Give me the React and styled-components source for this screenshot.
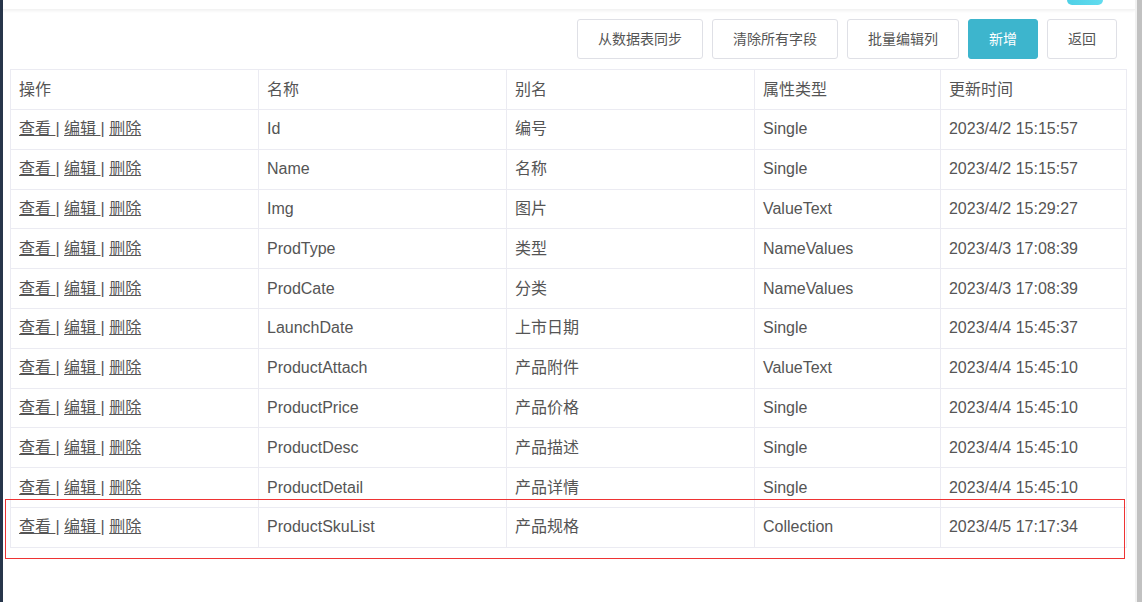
import React from "react";
import styled, { createGlobalStyle } from "styled-components";

const Global = createGlobalStyle`
  html, body { margin: 0; padding: 0; background: #fff; }
  body { font-family: "Liberation Sans", "Noto Sans CJK SC", sans-serif; overflow: hidden; line-height: 20px; }
`;

const Page = styled.div`
  display: flex;
  height: 602px;
  width: 1142px;
  position: relative;
`;

const SideStrip = styled.div`
  width: 3px;
  flex: none;
  background: #27354a;
`;

const Main = styled.div`
  flex: 1;
  display: flex;
  flex-direction: column;
  min-width: 0;
`;

const TopBar = styled.div`
  height: 9px;
  flex: none;
  background: #fff;
  box-shadow: 0 1px 3px rgba(0, 0, 0, 0.06);
  border-bottom: 1px solid #f3f3f3;
  display: flex;
  justify-content: flex-end;
  padding-right: 32px;
`;

const Pill = styled.div`
  width: 36px;
  height: 5px;
  border-radius: 0 0 14px 14px;
  background: linear-gradient(90deg, #4fd0e6, #62dcef);
`;

const Content = styled.div`
  padding: 9px 8px 0 7px;
`;

const Toolbar = styled.div`
  display: flex;
  justify-content: flex-end;
  gap: 9px;
  padding-right: 10px;
  margin-bottom: 10px;
`;

const Button = styled.button`
  height: 40px;
  padding: 0 20px;
  font-family: inherit;
  font-size: 14px;
  line-height: 18px;
  border-radius: 3px;
  border: 1px solid ${(p) => (p.$primary ? "#3db5cd" : "#dfe0e6")};
  background: ${(p) => (p.$primary ? "#3db5cd" : "#fff")};
  color: ${(p) => (p.$primary ? "#fff" : "#555")};
  cursor: pointer;
`;

const Table = styled.table`
  width: 100%;
  border-collapse: collapse;
  table-layout: fixed;
  font-size: 16px;
  line-height: 20px;
  color: #555;
`;

const Th = styled.th`
  width: ${(p) => p.$w};
  text-align: left;
  font-weight: normal;
  height: 40px;
  padding: 0 8px;
  border: 1px solid #ebebf2;
  box-sizing: border-box;
`;

const Td = styled.td`
  height: 39.8px;
  padding: 0 8px;
  border: 1px solid #ebebf2;
  box-sizing: border-box;
  white-space: nowrap;
`;

const Link = styled.a`
  color: #555;
  text-decoration: underline;
  cursor: pointer;
`;

const Highlight = styled.div`
  position: absolute;
  left: 5px;
  top: 499px;
  width: 1120px;
  height: 60px;
  box-sizing: border-box;
  border: 1px solid #ee3333;
  pointer-events: none;
`;

const ScrollBar = styled.div`
  width: 7px;
  flex: none;
  background: #f1f1f1;
  display: flex;
  justify-content: flex-end;
`;

const Thumb = styled.div`
  width: 5px;
  height: 100%;
  background: #c1c1c1;
`;

const rows = [
  ["Id", "编号", "Single", "2023/4/2 15:15:57"],
  ["Name", "名称", "Single", "2023/4/2 15:15:57"],
  ["Img", "图片", "ValueText", "2023/4/2 15:29:27"],
  ["ProdType", "类型", "NameValues", "2023/4/3 17:08:39"],
  ["ProdCate", "分类", "NameValues", "2023/4/3 17:08:39"],
  ["LaunchDate", "上市日期", "Single", "2023/4/4 15:45:37"],
  ["ProductAttach", "产品附件", "ValueText", "2023/4/4 15:45:10"],
  ["ProductPrice", "产品价格", "Single", "2023/4/4 15:45:10"],
  ["ProductDesc", "产品描述", "Single", "2023/4/4 15:45:10"],
  ["ProductDetail", "产品详情", "Single", "2023/4/4 15:45:10"],
  ["ProductSkuList", "产品规格", "Collection", "2023/4/5 17:17:34"],
];

export default function App() {
  return (
    <>
      <Global />
      <Page>
        <SideStrip />
        <Main>
          <TopBar>
            <Pill />
          </TopBar>
          <Content>
            <Toolbar>
              <Button>从数据表同步</Button>
              <Button>清除所有字段</Button>
              <Button>批量编辑列</Button>
              <Button $primary>新增</Button>
              <Button>返回</Button>
            </Toolbar>
            <Table>
              <thead>
                <tr>
                  <Th $w="22.222%">操作</Th>
                  <Th $w="22.222%">名称</Th>
                  <Th $w="22.222%">别名</Th>
                  <Th $w="16.667%">属性类型</Th>
                  <Th $w="16.667%">更新时间</Th>
                </tr>
              </thead>
              <tbody>
                {rows.map((r) => (
                  <tr key={r[0]}>
                    <Td>
                      <Link>查看 </Link>| <Link>编辑 </Link>| <Link>删除</Link>
                    </Td>
                    <Td>{r[0]}</Td>
                    <Td>{r[1]}</Td>
                    <Td>{r[2]}</Td>
                    <Td>{r[3]}</Td>
                  </tr>
                ))}
              </tbody>
            </Table>
          </Content>
        </Main>
        <ScrollBar>
          <Thumb />
        </ScrollBar>
        <Highlight />
      </Page>
    </>
  );
}
